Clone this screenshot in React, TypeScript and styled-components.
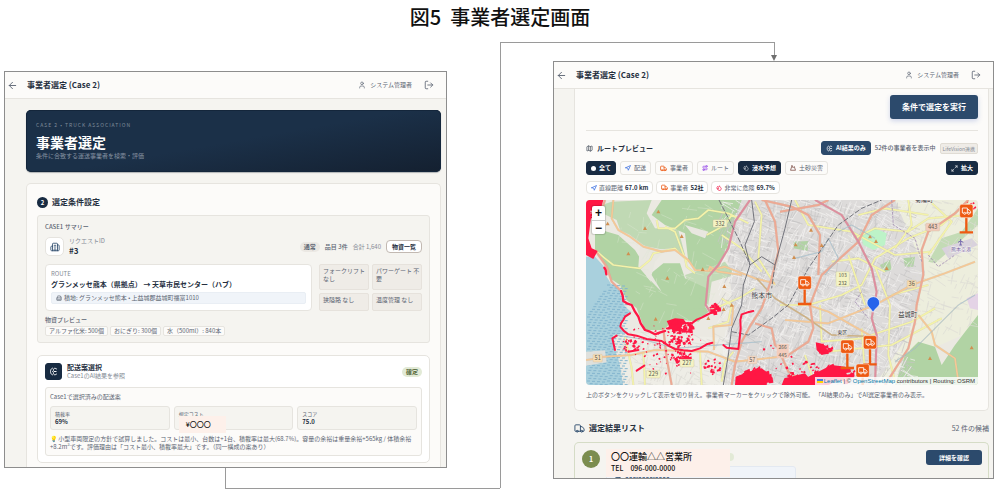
import React from "react";
import styled, { createGlobalStyle, css } from "styled-components";
import {
  ArrowLeft,
  Building2,
  Droplets,
  LogOut,
  Map as MapIcon,
  Maximize2,
  Mountain,
  Navigation,
  Route,
  Truck,
  User,
} from "lucide-react";

const c = {
  navy: "#182b42",
  blue: "#2c4a6c",
  ink: "#26303f",
  text: "#5b6472",
  muted: "#858b95",
  line: "#e6e4df",
  paper: "#fcfbf9",
  sand: "#f5f4f0",
  stone: "#efece7",
  sage: "#e2ead6",
  peach: "#fdf0ea",
};

const GlobalStyle = createGlobalStyle`
  * { box-sizing: border-box; }
  body {
    margin: 0;
    background: #fff;
    color: ${c.ink};
    font: 6px/8px "Noto Sans CJK JP", "Noto Sans", sans-serif;
  }
  h1, h2, h3, p, dl, dd, dt, ul { margin: 0; padding: 0; font: inherit; }
  ul { list-style: none; }
  button { font: inherit; color: inherit; cursor: pointer; margin: 0; }
  svg { flex: none; display: block; }
`;

/* ---------- figure ---------- */
const Page = styled.main`
  position: relative;
  padding-bottom: 15px;
`;
const FigureTitle = styled.h1`
  height: 61px;
  padding-top: 2px;
  text-align: center;
  font-size: 20px;
  line-height: 30px;
  font-weight: 500;
  color: #111;
  white-space: pre;
`;
const Panels = styled.div`
  display: grid;
  grid-template-columns: minmax(0, 443fr) minmax(0, 441fr);
  column-gap: 106px;
  align-items: start;
  padding: 0 6px 0 4px;
`;
const Connector = styled.svg`
  position: absolute;
  inset: 0;
  width: 100%;
  height: 100%;
  pointer-events: none;
`;
const Screen = styled.section<{ $drop?: boolean }>`
  margin-top: ${(p) => (p.$drop ? 10 : 0)}px;
  border: 1px solid #8d8d8d;
  background: ${c.sand};
  overflow: hidden;
`;

/* ---------- app bar ---------- */
const Bar = styled.header`
  display: flex;
  align-items: center;
  height: 27px;
  padding: 0 12px 0 2px;
  background: ${c.paper};
  border-bottom: 1px solid ${c.line};
`;
const IconButton = styled.button`
  display: flex;
  padding: 0;
  border: 0;
  background: none;
  color: ${c.text};
`;
const BarTitle = styled.h2`
  flex: 1;
  margin-left: 9px;
  font-size: 8px;
  line-height: 12px;
  font-weight: 700;
`;
const Account = styled.span`
  display: flex;
  align-items: center;
  gap: 4px;
  margin-right: 12px;
  color: ${c.text};
`;

/* ---------- shared parts ---------- */
const Row = styled.div<{ $gap?: number; $top?: number; $h?: number }>`
  display: flex;
  align-items: center;
  gap: ${(p) => p.$gap ?? 0}px;
  margin-top: ${(p) => p.$top ?? 0}px;
  height: ${(p) => (p.$h ? `${p.$h}px` : "auto")};
`;
const Spacer = styled.span`
  flex: 1;
`;
const SectionTitle = styled.h3`
  font-size: 8px;
  line-height: 12px;
  font-weight: 700;
`;
const SubTitle = styled.h3`
  font-size: 7px;
  line-height: 9px;
  font-weight: 700;
`;
const Caption = styled.p<{ $strong?: boolean }>`
  color: ${(p) => (p.$strong ? c.text : c.muted)};
  font-weight: ${(p) => (p.$strong ? 500 : 400)};
  white-space: nowrap;
`;
const Tile = styled.span<{ $dark?: boolean }>`
  display: flex;
  align-items: center;
  justify-content: center;
  width: ${(p) => (p.$dark ? 17 : 19)}px;
  height: ${(p) => (p.$dark ? 17 : 19)}px;
  border-radius: ${(p) => (p.$dark ? 3 : 5)}px;
  border: 1px solid ${(p) => (p.$dark ? c.navy : c.line)};
  background: ${(p) => (p.$dark ? c.navy : "#fff")};
  color: ${(p) => (p.$dark ? "#fff" : c.blue)};
`;

/* ---------- condition screen ---------- */
const LeftMain = styled.div`
  padding: 11px 5px 0 21px;
`;
const Hero = styled.div`
  padding: 11px 10px 12px;
  border-radius: 5px;
  background: linear-gradient(170deg, #1b3048 0%, #1b3048 50%, #142030 100%);
  box-shadow: inset 0 0 0 1px #14263b, 0 1px 1px rgba(20, 30, 45, 0.3);
  color: #8793a2;
`;
const Eyebrow = styled.p`
  font-size: 5px;
  letter-spacing: 1px;
  color: #7f8c9a;
`;
const HeroTitle = styled.h2`
  margin-top: 3px;
  font-size: 14px;
  line-height: 20px;
  font-weight: 700;
  color: #fff;
`;
const ConditionCard = styled.div`
  margin-top: 11px;
  padding: 11px 10px 4px;
  border: 1px solid ${c.line};
  border-bottom: 0;
  border-radius: 5px 5px 0 0;
  background: ${c.paper};
`;
const StepNumber = styled.span`
  width: 11px;
  height: 11px;
  border-radius: 50%;
  background: ${c.navy};
  color: #fff;
  font-weight: 700;
  line-height: 11px;
  text-align: center;
`;
const Summary = styled.div`
  margin-top: 6px;
  padding: 7px 7px 6px;
  border: 1px solid ${c.line};
  border-radius: 3px;
  background: ${c.sand};
`;
const RequestId = styled.p`
  font-size: 8px;
  line-height: 11px;
  font-weight: 700;
`;
const Pill = styled.span<{ $sage?: boolean }>`
  padding: 0 4px;
  border-radius: 5px;
  line-height: 10px;
  font-weight: 700;
  background: ${(p) => (p.$sage ? c.sage : "#ebe8e3")};
  color: ${(p) => (p.$sage ? "#56683a" : c.text)};
`;
const OutlineButton = styled.button`
  height: 13px;
  padding: 0 5px;
  border: 1px solid #c2b9b2;
  border-radius: 4px;
  background: #fff;
  font-weight: 700;
`;
const RouteGrid = styled.div`
  display: grid;
  grid-template-columns: minmax(0, 1fr) 103px;
  gap: 7px;
  margin-top: 8px;
`;
const RouteBox = styled.div`
  padding: 5px 5px 4px;
  border: 1px solid ${c.line};
  border-radius: 4px;
  background: #fff;
`;
const RouteText = styled.p`
  margin-top: 1px;
  font-size: 7px;
  line-height: 10px;
  font-weight: 700;
`;
const Address = styled.p`
  display: flex;
  align-items: center;
  gap: 2px;
  height: 12px;
  margin-top: 3px;
  padding: 0 4px;
  border: 1px solid #e9eef4;
  border-radius: 2px;
  background: #f0f4f9;
  color: ${c.text};
`;
const Requirements = styled.ul`
  display: grid;
  grid-template-columns: 1fr 1fr;
  grid-template-rows: 26px 18px;
  gap: 3px;
  color: ${c.text};
`;
const Requirement = styled.li`
  padding: 2px 0 0 3px;
  border: 1px solid #e6e2dc;
  border-radius: 2px;
  background: ${c.stone};
`;
const Chip = styled.li`
  height: 10px;
  padding: 0 3px;
  border: 1px solid ${c.line};
  border-radius: 2px;
  background: ${c.paper};
  color: ${c.text};
`;
const ChipList = styled.ul`
  display: flex;
  gap: 2px;
  margin-top: 2px;
`;
const PlanCard = styled.div`
  margin-top: 12px;
  padding: 7px 7px 6px;
  border: 1px solid ${c.line};
  border-radius: 5px;
  background: #fff;
`;
const PlanDetail = styled.div`
  margin-top: 7px;
  padding: 5px 4px 4px;
  border: 1px solid ${c.line};
  border-radius: 3px;
  background: ${c.paper};
  color: ${c.text};
`;
const Metrics = styled.dl`
  display: grid;
  grid-template-columns: repeat(3, minmax(0, 1fr));
  gap: 4px;
  margin: 5px 0;
`;
const Metric = styled.div`
  position: relative;
  height: 24px;
  padding: 3px 4px;
  border: 1px solid ${c.line};
  border-radius: 3px;
  background: ${c.sand};
  dt {
    font-size: 5px;
  }
  dd {
    font-weight: 700;
    color: ${c.ink};
  }
`;
const CostMask = styled.span`
  position: absolute;
  left: 4px;
  top: 9px;
  width: 47px;
  height: 17px;
  padding-left: 7px;
  background: ${c.peach};
  color: #111;
  font-size: 7px;
  line-height: 17px;
  font-weight: 500;
`;

/* ---------- result screen ---------- */
const RightMain = styled.div`
  padding: 0 4px 0 20px;
`;
const Sheet = styled.div`
  padding: 6px 10px 11px 11px;
  border: 1px solid ${c.line};
  border-top: 0;
  border-radius: 0 0 5px 5px;
  background: ${c.paper};
`;
const RunButton = styled.button`
  display: block;
  height: 24px;
  margin-left: auto;
  padding: 0 12px;
  border: 0;
  border-radius: 3px;
  background: ${c.blue};
  box-shadow: 0 2px 5px rgba(70, 100, 190, 0.25);
  color: #fff;
  font-size: 8px;
  font-weight: 700;
`;
const Divider = styled.hr`
  height: 1px;
  margin: 11px 0 10px;
  border: 0;
  background: ${c.line};
`;
const toneStyles = {
  navy: css`
    background: ${c.navy};
    border-color: ${c.navy};
    color: #fff;
    font-weight: 700;
  `,
  blue: css`
    background: ${c.blue};
    border-color: ${c.blue};
    color: #fff;
    font-weight: 700;
  `,
  plain: css`
    background: ${c.paper};
    border-color: ${c.line};
    color: ${c.text};
  `,
};
const ToolButton = styled.button<{ $tone: keyof typeof toneStyles }>`
  display: flex;
  align-items: center;
  gap: 3px;
  height: 14px;
  padding: 0 4px;
  border: 1px solid;
  border-radius: 3px;
  white-space: nowrap;
  ${(p) => toneStyles[p.$tone]}
`;
const Dot = styled.span`
  width: 5px;
  height: 5px;
  border-radius: 50%;
  background: #fff;
`;
const Stat = styled.span`
  display: flex;
  align-items: center;
  gap: 2px;
  height: 13px;
  padding: 0 4px;
  border: 1px solid ${c.line};
  border-radius: 4px;
  background: #fff;
  color: ${c.text};
  b {
    color: ${c.ink};
  }
`;
const VendorTag = styled.span`
  padding: 0 2px;
  border: 1px solid #e0dcd4;
  border-radius: 2px;
  background: ${c.stone};
  color: ${c.muted};
  font-size: 5px;
  line-height: 9px;
`;
const MapFrame = styled.div`
  position: relative;
  height: 185px;
  margin-top: 6px;
  border-radius: 4px;
  overflow: hidden;
`;
const ZoomControl = styled.div`
  position: absolute;
  left: 6px;
  top: 6px;
  display: grid;
  border-radius: 2px;
  background: #fff;
  box-shadow: 0 0 1px 1px rgba(0, 0, 0, 0.15);
  button {
    width: 13px;
    height: 14px;
    padding: 0;
    border: 0;
    background: none;
    color: #111;
    font: 700 12px/14px "Liberation Sans", sans-serif;
  }
  button + button {
    border-top: 1px solid #ccc;
  }
`;
const Attribution = styled.p`
  position: absolute;
  right: 0;
  bottom: 0;
  display: flex;
  align-items: center;
  gap: 1px;
  padding: 0 3px 0 2px;
  background: rgba(255, 255, 255, 0.8);
  color: #333;
  font: 6px/8px "Liberation Sans", sans-serif;
  white-space: pre;
  a {
    color: #0078a8;
    text-decoration: none;
  }
`;
const Hint = styled.p`
  margin-top: 6px;
  color: ${c.text};
`;
const Count = styled.span`
  font-size: 7px;
  color: ${c.text};
`;
const ResultCard = styled.article`
  position: relative;
  display: flex;
  align-items: flex-start;
  height: 36px;
  margin-top: 8px;
  padding: 7px 6px 0 7px;
  border: 1px solid #d5dcc6;
  border-bottom: 0;
  border-radius: 5px 5px 0 0;
  overflow: hidden;
`;
const Rank = styled.span`
  width: 18px;
  height: 18px;
  border-radius: 50%;
  background: #7b8d4f;
  color: #fff;
  font-size: 7px;
  font-weight: 700;
  line-height: 18px;
  text-align: center;
`;
const ResultBody = styled.div`
  width: 190px;
  margin-left: 6px;
`;
const MatchTag = styled.span`
  display: block;
  width: 24px;
  height: 8px;
  margin: 3px 0 0 104px;
  border-radius: 4px;
  background: ${c.sage};
`;
const PhoneBox = styled.p`
  display: flex;
  gap: 4px;
  margin-top: 5px;
  padding: 6px 8px;
  border: 1px solid #e3e9f1;
  border-radius: 3px;
  background: #f0f4f9;
  color: ${c.blue};
  font-weight: 700;
`;
const CompanyMask = styled.div`
  position: absolute;
  left: 31px;
  top: 6px;
  width: 124px;
  height: 28px;
  padding: 2px 5px;
  background: ${c.peach};
  color: #111;
  font-size: 7px;
  line-height: 11px;
  font-weight: 500;
  white-space: pre;
  h3 {
    font-size: 9px;
    line-height: 12px;
  }
`;
const DetailButton = styled.button`
  width: 56px;
  height: 15px;
  padding: 0;
  border: 0;
  border-radius: 3px;
  background: ${c.blue};
  color: #fff;
  font-weight: 700;
`;

/* ---------- drawings ---------- */
function AiIcon({ size = 8 }: { size?: number }) {
  return (
    <svg width={size} height={size} viewBox="0 0 24 24" fill="none" stroke="currentColor" strokeWidth="2.6" strokeLinecap="round">
      <path d="M9 3C2 5 2 19 9 21" />
      <path d="M20 5C14 1 11 5 12 9c-3 2-3 4 0 6-1 5 3 8 8 4" />
      <path d="M14 12h5" />
    </svg>
  );
}

let seed = 7;
const rnd = () => {
  seed = (seed * 16807) % 2147483647;
  return seed / 2147483647;
};
const streets = (count: number, x: number, y: number, w: number, h: number) => {
  let d = "";
  for (let i = 0; i < count; i++) {
    const a = (rnd() < 0.5 ? 0.35 : 1.95) + (rnd() - 0.5) * 0.6;
    const len = 12 + rnd() * 35;
    const sx = x + rnd() * w;
    const sy = y + rnd() * h;
    d += `M${sx.toFixed(0)} ${sy.toFixed(0)}l${(Math.cos(a) * len).toFixed(0)} ${(Math.sin(a) * len).toFixed(0)}`;
  }
  return d;
};
const specks = (count: number, cx: number, cy: number, rx: number, ry: number, size: number) => {
  let d = "";
  for (let i = 0; i < count; i++) {
    const a = rnd() * 6.28;
    const r = Math.sqrt(rnd());
    const s = size * (0.4 + rnd());
    d += `M${(cx + Math.cos(a) * r * rx).toFixed(0)} ${(cy + Math.sin(a) * r * ry).toFixed(0)}l${s.toFixed(0)} ${(-s * rnd()).toFixed(0)}l2 ${s.toFixed(0)}l${(-s).toFixed(0)} 2z`;
  }
  return d;
};

const cityBlocks = streets(750, 440, 10, 570, 560);
const cityStreets = streets(1000, 440, 10, 570, 560);
const plainStreets = streets(150, 140, 410, 310, 160) + streets(140, 1000, 10, 210, 400);
const hillStreets = streets(60, 90, 20, 350, 350);
const waves = (() => {
  let d = "";
  for (let y = 270; y < 570; y += 8)
    for (let x = 36 + (y % 3) * 4; x < 150; x += 15) if (x > 95 - (y - 270) / 1.5) d += `M${x} ${y + ((x * 7) % 4)}h9`;
  return d;
})();
const floodSpecks =
  specks(22, 50, 40, 20, 26, 10) +
  specks(30, 315, 395, 40, 18, 9) +
  specks(45, 320, 430, 35, 25, 6) +
  specks(40, 300, 480, 130, 70, 4) +
  specks(50, 315, 488, 35, 20, 6) +
  specks(26, 405, 515, 28, 26, 5) +
  specks(16, 415, 338, 16, 14, 9) +
  specks(30, 250, 420, 90, 30, 4) +
  specks(24, 160, 450, 26, 18, 5) +
  specks(70, 535, 545, 48, 24, 12) +
  specks(35, 680, 530, 55, 35, 6) +
  specks(55, 775, 535, 60, 26, 11) +
  specks(20, 740, 460, 24, 14, 8) +
  specks(12, 600, 470, 50, 50, 4) +
  specks(12, 1185, 30, 22, 12, 4);

const roads: { d: string; color: string; w: number }[] = [
  /* yellow local roads */
  { color: "#f3f3a9", w: 5, d: "M60 165L90 190 115 210 160 216 195 220 225 195 235 175 300 160 340 200M245 75L250 100 300 100 330 75 370 70 400 45 460 55 520 85M270 95L300 110 330 190 335 215 360 235M395 120L450 90 470 60" },
  { color: "#f3f3a9", w: 5, d: "M150 425L170 520 175 570M205 470L210 570M375 470L380 570M400 400L460 380 470 330 440 310M410 345L500 305 540 280M540 20L560 60 550 190 600 270M440 560L450 500 475 470" },
  { color: "#f3f3a9", w: 5, d: "M440 120L500 160 560 230M615 330L700 330 800 300 860 270 900 190 1000 130 1100 90 1180 20M660 15L700 90 830 110 960 180 1070 170M735 330L740 440 860 430 1010 380 1080 340M900 215L945 330 940 480 960 560M820 180L870 330M770 200L850 190 930 230" },
  { color: "#f3f3a9", w: 5, d: "M840 130L900 100 1000 110 1060 70 1180 60M1000 15L1010 90 960 160M1060 15L1130 80 1060 180M850 60L930 40 1060 60M950 300L1060 270M760 470L950 450 1100 370M690 480L720 570M860 400L870 540" },
  /* orange secondary roads */
  { color: "#f5c896", w: 5, d: "M115 15L110 70 130 105 165 125 205 155 260 170 300 165 340 195 360 225 400 228 450 215 540 250 600 265M60 487L170 480 240 465 400 470 480 500 620 485M33 495L70 490" },
  { color: "#f5c896", w: 5, d: "M400 228L405 215 430 230 500 240M417 465L415 395 470 390 475 330M630 375L760 385 900 330 1010 270 1110 235 1200 200M1030 360L1070 410 1080 450 1140 490 1150 560M700 330L760 350 900 430" },
  { color: "#cdb184", w: 4, d: "M545 250L600 310 690 365 770 420 900 425" },
  /* salmon primary roads */
  { color: "#eda994", w: 6, d: "M90 15L75 60 85 110M60 165L95 215 110 260 135 285M570 15L600 80 610 170 590 250 560 340 530 385 500 440 480 510 470 570M265 400L275 490 290 570M540 385L590 400 600 450 640 480 700 440 715 400 705 330 740 240 850 140 890 60 960 15" },
  { color: "#eda994", w: 6, d: "M560 15L650 35 700 60 735 120 730 240M615 50L730 30 760 15M1180 15L1140 55 1060 110 1040 165 1045 240 1025 330 1020 380 1000 460 930 570M620 485L640 530 700 570" },
  /* expressway */
  { color: "#dd8e9f", w: 6, d: "M525 15L480 80 460 160 430 210 400 245 392 330 405 350M720 15L800 60 850 140 890 220 905 290 890 370 905 420 900 570" },
  { color: "#9fc4dc", w: 2, d: "M120 420L200 432 300 460 430 450 560 440M760 130L790 190 750 240M660 190L740 170 760 130M960 500L1020 460 1150 330 1200 300M790 110L830 90 900 130" },
];

const peaks = [
  [250, 50], [210, 100], [98, 86], [160, 176], [320, 124], [383, 223], [277, 249], [448, 274], [242, 372], [470, 330], [446, 343], [400, 370],
  [708, 105], [662, 149], [740, 151], [657, 187], [885, 125], [903, 139], [935, 220], [1065, 490], [1190, 458],
];
const shields = [
  { x: 435, y: 86, t: "332", fill: "#f4f3c4" },
  { x: 68, y: 490, t: "51", fill: "#f7dfb8" },
  { x: 532, y: 495, t: "57", fill: "#f6d9c8" },
  { x: 235, y: 538, t: "229", fill: "#f4f3c4" },
  { x: 336, y: 505, t: "227", fill: "#f4f3c4" },
  { x: 1073, y: 97, t: "443", fill: "#f3cdbd" },
  { x: 1010, y: 268, t: "36", fill: "#f5dcb0" },
];
const trucks = [
  { x: 689, y: 263, stem: 64 },
  { x: 1174, y: 48, stem: 64 },
  { x: 817, y: 455, stem: 64 },
  { x: 885, y: 442, stem: 66 },
  { x: 863, y: 527, stem: 60 },
];

function RegionMap() {
  return (
    <svg width="100%" height="100%" viewBox="33 15 1176 555" preserveAspectRatio="xMidYMid slice" role="img" aria-label="熊本市周辺の地図" fontFamily='"Noto Sans CJK JP", sans-serif'>
      <rect x="-500" y="-200" width="2400" height="1000" fill="#ebe9e2" />
      <path d="M440 15H1010L1060 200 1020 400 900 570H440L470 300z" fill="#dddbda" />
      <path d="M960 15H1209V400L1050 470 960 570H900L1000 420 1050 230z" fill="#edeedd" />
      <path d="M140 410L460 430 450 570H150z" fill="#eeede6" />
      <g fill="#b1d3a4">
        <path d="M50 40L110 20 230 15 215 55 240 100 310 105 330 180 290 160 240 165 205 150 165 120 135 105 125 75z" opacity=".75" />
        <path d="M260 15H500L470 100 455 170 435 205 400 220 365 225 340 200 330 115 270 90 230 60z" />
        <path d="M60 100L130 120 180 165 205 205 215 245 260 300 310 335 380 320 400 350 370 380 300 372 265 405 210 405 185 340 155 315 135 270 105 250 90 205 60 165z" />
        <path d="M222 240L265 205 315 205 330 250 395 280 390 340 300 345 240 300z" />
        <path d="M330 240L450 200 480 240 410 260 400 330 350 290z" opacity=".7" />
        <path d="M970 540L990 480 1030 440 1080 455 1100 510 1140 450 1209 360V570H960z" />
        <path d="M1060 200L1100 130 1160 110 1209 40V90L1120 170 1080 205z" opacity=".7" />
        <path d="M655 140L700 138 698 168 655 160zM915 210L945 195 950 225 925 232zM985 190L1020 185 1015 215 990 215z" />
      </g>
      <path d="M1100 160L1190 130 1209 150 1120 190z" fill="#d9d2dd" />
      <path d="M1175 310L1209 295V345L1185 340z" fill="#e4d3e6" />
      <path d="M195 150L270 165 240 200 230 240 260 290 220 250 190 215zM330 90L400 110 390 130 350 115z" fill="#e8e7df" />
      <path d={hillStreets} stroke="#dfe8d5" strokeWidth="2" fill="none" opacity=".6" />
      <path d={cityBlocks} stroke="#c6c4c5" strokeWidth="3" fill="none" opacity=".7" />
      <path d={cityStreets} stroke="#f1f0ef" strokeWidth="2.2" fill="none" />
      <path d={plainStreets} stroke="#dcdbd5" strokeWidth="2" fill="none" />
      <path d="M855 115L900 100 935 115 930 150 895 165 865 150z" fill="#bdf3c8" />
      <path d="M33 185L60 185 85 212 95 245 108 266 130 275 137 300 150 335 170 352 140 380 136 398 160 414 115 420 118 462 130 490 138 530 145 575H33z" fill="#a9d0dd" />
      <path d={waves} stroke="#82b4ce" strokeWidth="3" />
      <path d="M33 470L90 466 95 502 33 512z" fill="#dfe0dc" />
      {roads.map((r) => (
        <g key={r.d} fill="none" strokeLinejoin="round">
          <path d={r.d} stroke="#b9a58d" strokeOpacity=".35" strokeWidth={r.w + 1.5} />
          <path d={r.d} stroke={r.color} strokeWidth={r.w} />
        </g>
      ))}
      <g fill="none" stroke="#72737b" strokeWidth="3">
        <path d="M530 15L538 80 510 150 525 210 505 270 500 330 470 400 460 480 445 570M525 210L560 185 600 210 630 100 650 15" />
        <path d="M432 15L460 70 495 140 525 210M470 410L520 420 590 370 640 330 700 220 790 90 860 40 920 15M600 210L590 280" strokeDasharray="16 5" />
      </g>
      <path d="M950 15L955 90 1020 130 1040 200M860 290L840 320 880 370M1060 180L1090 215 1140 180" fill="none" stroke="#a58fb5" strokeWidth="2.5" strokeDasharray="8 4" />
      <g fill="#ff1744">
        <path d="M33 15H85L78 40 60 48 45 45 48 70 40 130 50 160 68 168 55 192 33 180z" />
        <path d="M275 378L300 370 325 372 335 385 315 392 325 405 300 410 285 398z" />
        <path d="M482 545L520 530 560 520 580 535 575 570H480z" />
        <path d="M722 442L745 447 762 475 740 480 725 465zM700 545L770 510 810 515 815 545 760 570H700zM628 550L690 535 720 570H620z" />
        <path d={floodSpecks} />
      </g>
      <g fill="none" stroke="#ff1744" strokeLinecap="round" strokeLinejoin="round">
        <path d="M88 218L92 225 94 238M138 288L143 302 145 318 158 326 170 330 180 350 190 365 197 385 210 405 225 410 240 418 256 412 270 408" strokeWidth="7" />
        <path d="M165 355L150 365 145 375 138 385 136 395 147 408 160 418 185 422 215 432 260 438 280 452 300 462 325 466 350 468 375 460 395 448 412 443M120 465L112 430 125 422M320 385L350 385 365 374 380 368 395 360 410 352" strokeWidth="6" />
        <path d="M445 450L455 458 490 462 494 430 497 400 496 375 500 358 518 352 535 348M160 470L190 465M185 527L208 512" strokeWidth="6" />
      </g>
      {peaks.map(([x, y]) => (
        <path key={`${x}-${y}`} d={`M${x} ${y - 6}l6 11h-12z`} fill="#d08f50" />
      ))}
      {shields.map((s) => (
        <g key={s.t}>
          <rect x={s.x - s.t.length * 7} y={s.y - 12} width={s.t.length * 14} height="23" rx="3" fill={s.fill} stroke="#c9b79a" />
          <text x={s.x} y={s.y + 6} fontSize="17" textAnchor="middle" fill="#5a5a50">{s.t}</text>
        </g>
      ))}
      <g fontSize="15" textAnchor="middle" fill="#5a5a50">
        <rect x="783" y="230" width="40" height="44" rx="3" fill="#f4f3c4" stroke="#c9c79a" />
        <text x="803" y="247">103</text>
        <text x="803" y="270">232</text>
        <rect x="605" y="446" width="36" height="44" rx="3" fill="#f3cdbd" />
        <text x="623" y="463">266</text>
        <text x="623" y="486">445</text>
      </g>
      <g fill="#3d3d42" textAnchor="middle" stroke="#f4f2ef" strokeWidth="3" paintOrder="stroke">
        <text x="560" y="309" fontSize="21">熊本市</text>
        <text x="998" y="365" fontSize="19">益城町</text>
        <text x="1047" y="22" fontSize="18">菊陽町</text>
        <text x="802" y="416" fontSize="15">東区</text>
        <text x="1158" y="168" fontSize="15" fill="#7a68a8">熊本空港</text>
      </g>
      <path d="M1157 132v18M1149 142l8-4 8 4M1153 150h8" stroke="#7568ae" strokeWidth="3" fill="none" />
      {trucks.map((t) => (
        <g key={`${t.x}-${t.y}`} transform={`translate(${t.x} ${t.y})`}>
          <path d={`M0 10V${t.stem}M-20 ${t.stem}H20`} stroke="#ee5a12" strokeWidth="7" />
          <rect x="-20" y="-20" width="40" height="40" rx="6" fill="#ee5a12" stroke="#fff" strokeWidth="1.5" />
          <g fill="none" stroke="#fff" strokeWidth="2.6" strokeLinejoin="round">
            <path d="M-8 6H-12V-9H3V6H-2M3-4H8L13 2V6H11" />
            <circle cx="-5" cy="7" r="3" />
            <circle cx="7" cy="7" r="3" />
          </g>
        </g>
      ))}
      <path d="M894 352C886 338 876 334 876 324a19 19 0 0 1 38 0C914 334 902 338 894 352z" fill="#2563eb" stroke="#fff" strokeWidth="2" />
    </svg>
  );
}

function AppBar() {
  return (
    <Bar>
      <IconButton aria-label="戻る"><ArrowLeft size={11} strokeWidth={2} /></IconButton>
      <BarTitle>事業者選定 (Case 2)</BarTitle>
      <Account><User size={8} />システム管理者</Account>
      <IconButton aria-label="ログアウト"><LogOut size={10} /></IconButton>
    </Bar>
  );
}

function ConditionScreen() {
  return (
    <Screen $drop>
      <AppBar />
      <LeftMain>
        <Hero>
          <Eyebrow>CASE 2 • TRUCK ASSOCIATION</Eyebrow>
          <HeroTitle>事業者選定</HeroTitle>
          <p>条件に合致する運送事業者を検索・評価</p>
        </Hero>
        <ConditionCard>
          <Row $gap={4} $h={14}>
            <StepNumber>2</StepNumber>
            <SectionTitle>選定条件設定</SectionTitle>
          </Row>
          <Summary>
            <Caption $strong>CASE1 サマリー</Caption>
            <Row $gap={5} $top={6} $h={19}>
              <Tile><Building2 size={10} /></Tile>
              <div>
                <Caption>リクエストID</Caption>
                <RequestId>#3</RequestId>
              </div>
              <Spacer />
              <Pill>通常</Pill>
              <Caption $strong>品目 3件</Caption>
              <Caption>合計 1,640</Caption>
              <OutlineButton>物資一覧</OutlineButton>
            </Row>
            <RouteGrid>
              <RouteBox>
                <Caption>ROUTE</Caption>
                <RouteText>グランメッセ熊本（県拠点） → 天草市民センター（ハブ）</RouteText>
                <Address><Building2 size={6} />積地: グランメッセ熊本 • 上益城郡益城町福富1010</Address>
              </RouteBox>
              <Requirements>
                <Requirement>フォークリフト なし</Requirement>
                <Requirement>パワーゲート 不要</Requirement>
                <Requirement>狭隘路 なし</Requirement>
                <Requirement>温度管理 なし</Requirement>
              </Requirements>
            </RouteGrid>
            <Row $top={5}><Caption $strong>物資プレビュー</Caption></Row>
            <ChipList>
              <Chip>アルファ化米: 500個</Chip>
              <Chip>おにぎり: 300個</Chip>
              <Chip>水（500ml）: 840本</Chip>
            </ChipList>
          </Summary>
          <PlanCard>
            <Row $gap={5} $h={17}>
              <Tile $dark><AiIcon size={9} /></Tile>
              <div>
                <SubTitle>配送案選択</SubTitle>
                <Caption>Case1のAI結果を参照</Caption>
              </div>
              <Spacer />
              <Pill $sage>確定</Pill>
            </Row>
            <PlanDetail>
              <p>Case1で選択済みの配送案</p>
              <Metrics>
                <Metric><dt>積載率</dt><dd>69%</dd></Metric>
                <Metric><dt>想定コスト</dt><dd><CostMask>¥〇〇〇</CostMask></dd></Metric>
                <Metric><dt>スコア</dt><dd>75.0</dd></Metric>
              </Metrics>
              <p>
                💡 小型車両限定の方針で試算しました。コストは最小、台数は+1台、積載率は最大(68.7%)。容量の余裕は重量余裕+565kg / 体積余裕+8.2m³です。評価理由は「コスト最小、積載率最大」です。（同一構成の案あり）
              </p>
            </PlanDetail>
          </PlanCard>
        </ConditionCard>
      </LeftMain>
    </Screen>
  );
}

function ResultScreen() {
  return (
    <Screen>
      <AppBar />
      <RightMain>
        <Sheet>
          <RunButton>条件で選定を実行</RunButton>
          <Divider />
          <Row $gap={4} $h={14}>
            <MapIcon size={7} />
            <SubTitle>ルートプレビュー</SubTitle>
            <Spacer />
            <ToolButton $tone="blue"><AiIcon size={7} />AI結果のみ</ToolButton>
            <Caption $strong>52件の事業者を表示中</Caption>
            <VendorTag>LifeVision連携</VendorTag>
          </Row>
          <Row $gap={4} $top={6}>
            <ToolButton $tone="navy"><Dot />全て</ToolButton>
            <ToolButton $tone="plain"><Navigation size={6} color="#3b6fe0" strokeWidth={3} />配送</ToolButton>
            <ToolButton $tone="plain"><Truck size={7} color="#ee6a2c" strokeWidth={3} />事業者</ToolButton>
            <ToolButton $tone="plain"><Route size={6} color="#9a4fe8" strokeWidth={3} />ルート</ToolButton>
            <ToolButton $tone="navy"><Droplets size={6} />浸水予想</ToolButton>
            <ToolButton $tone="plain"><Mountain size={6} color="#7a4a42" strokeWidth={3} />土砂災害</ToolButton>
            <Spacer />
            <ToolButton $tone="navy"><Maximize2 size={7} />拡大</ToolButton>
          </Row>
          <Row $gap={3} $top={6}>
            <Stat><Navigation size={6} color="#3b6fe0" strokeWidth={3} />直線距離 <b>67.0 km</b></Stat>
            <Stat><Truck size={7} color="#ee6a2c" strokeWidth={3} />事業者 <b>52社</b></Stat>
            <Stat><Droplets size={6} color="#f0264f" strokeWidth={3} />非常に危険 <b>69.7%</b></Stat>
          </Row>
          <MapFrame>
            <RegionMap />
            <ZoomControl>
              <button aria-label="拡大表示">+</button>
              <button aria-label="縮小表示">−</button>
            </ZoomControl>
            <Attribution>
              <svg width="6" height="4" viewBox="0 0 6 4"><path fill="#4c7be1" d="M0 0h6v2H0z" /><path fill="#ffd500" d="M0 2h6v2H0z" /></svg>
              <span><a href="#leaflet">Leaflet</a> | © <a href="#osm">OpenStreetMap</a> contributors | Routing: OSRM</span>
            </Attribution>
          </MapFrame>
          <Hint>上のボタンをクリックして表示を切り替え。事業者マーカーをクリックで除外可能。 「AI結果のみ」でAI選定事業者のみ表示。</Hint>
        </Sheet>
        <Row $gap={4} $top={11} $h={12}>
          <Truck size={11} color={c.blue} />
          <SectionTitle>選定結果リスト</SectionTitle>
          <Spacer />
          <Count>52 件の候補</Count>
        </Row>
        <ResultCard>
          <Rank>1</Rank>
          <ResultBody>
            <MatchTag />
            <PhoneBox><Truck size={6} />XXX-XXXX-XXXX</PhoneBox>
          </ResultBody>
          <CompanyMask>
            <h3>〇〇運輸△△営業所</h3>
            <p>TEL　096-000-0000</p>
          </CompanyMask>
          <Spacer />
          <DetailButton>詳細を確認</DetailButton>
        </ResultCard>
      </RightMain>
    </Screen>
  );
}

export default function App() {
  return (
    <>
      <GlobalStyle />
      <Page>
        <FigureTitle>図5  事業者選定画面</FigureTitle>
        <Panels>
          <ConditionScreen />
          <ResultScreen />
        </Panels>
        <Connector aria-hidden="true">
          <g stroke="#9a9a9a" strokeWidth="1" shapeRendering="crispEdges">
            <line x1="22.5%" y1="468" x2="22.5%" y2="488" />
            <line x1="22.5%" y1="488" x2="50%" y2="488" />
            <line x1="50%" y1="42" x2="50%" y2="488" />
            <line x1="50%" y1="42" x2="77.4%" y2="42" />
            <line x1="77.4%" y1="42" x2="77.4%" y2="57" />
          </g>
          <svg x="77.4%" y="55" overflow="visible">
            <path d="M-3 0H3L0 6z" fill="#6f6f6f" />
          </svg>
        </Connector>
      </Page>
    </>
  );
}
